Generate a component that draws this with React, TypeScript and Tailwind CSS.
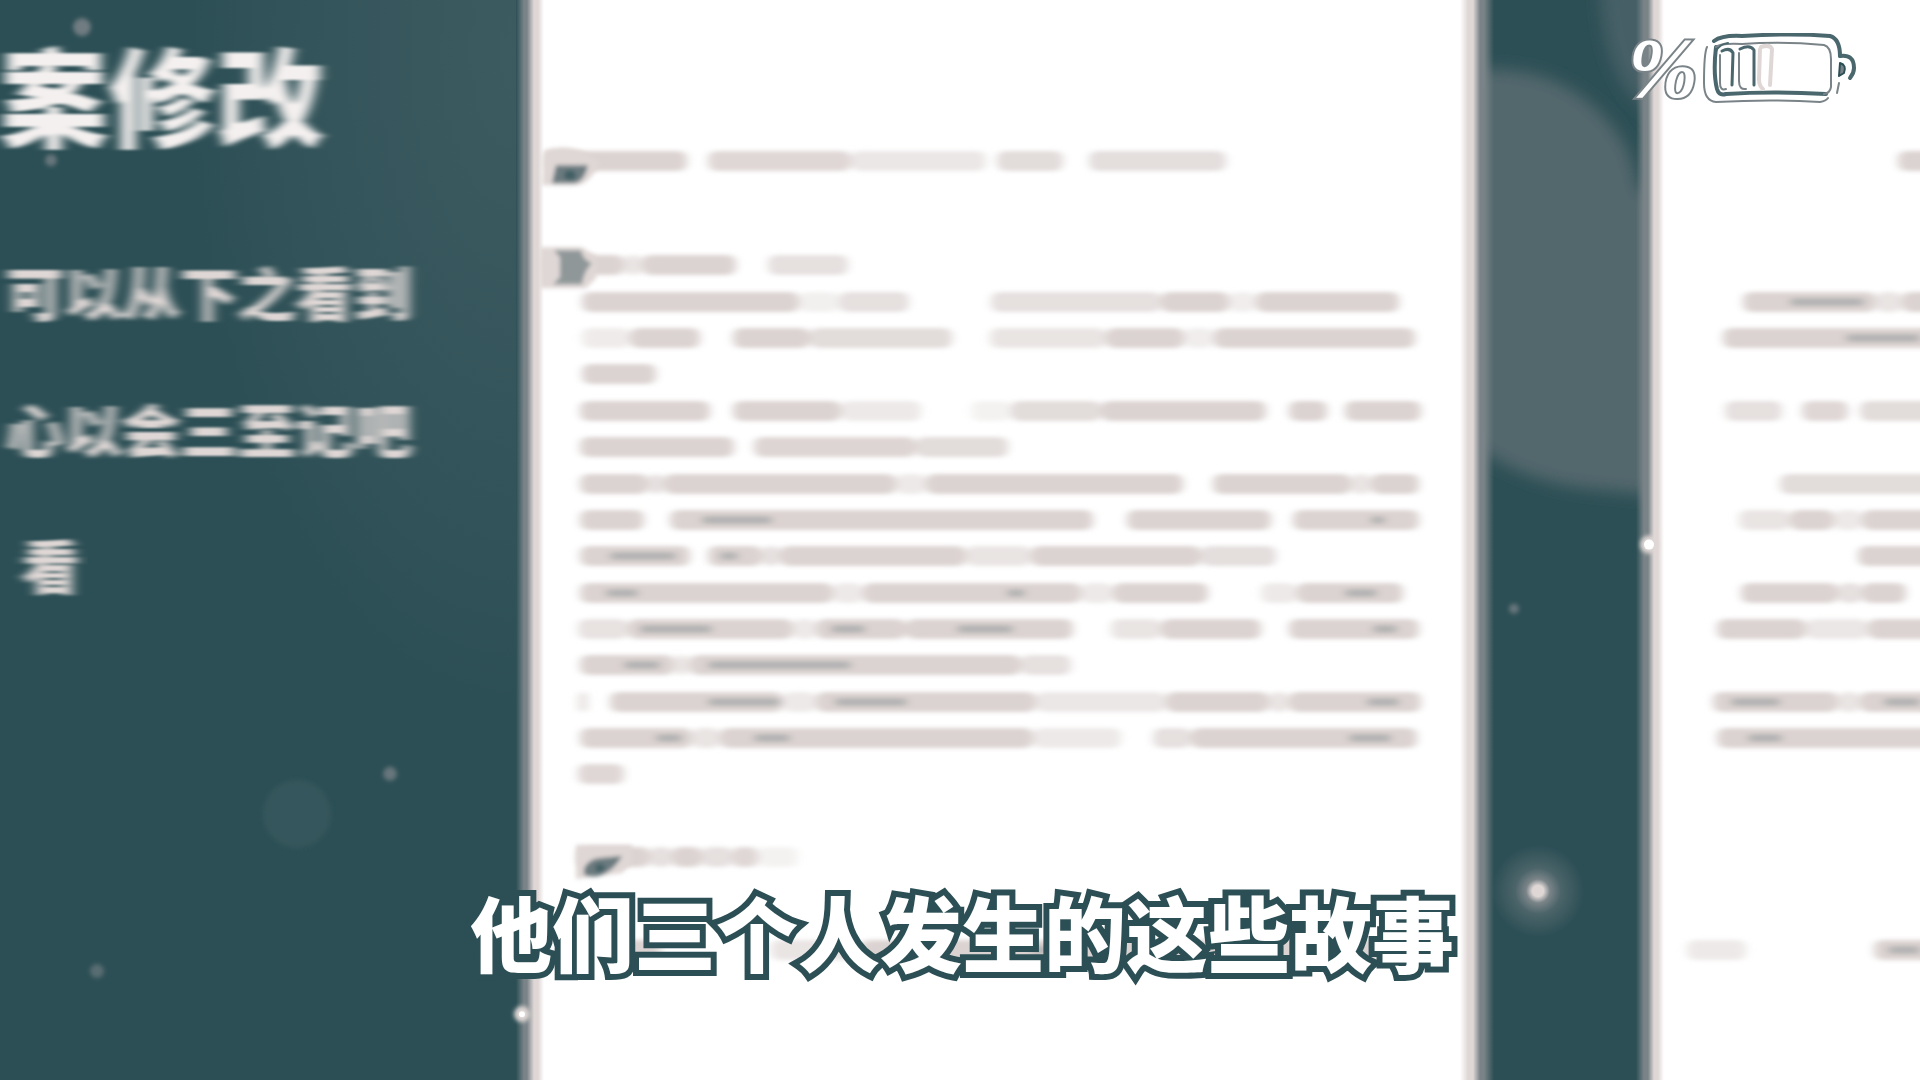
import React from "react";

type Bar = { from: number; to: number; tone?: number; speck?: [number, number] };
type Block = { space: string; rows: Bar[][] };

const b = (from: number, to: number, tone = 1, speck?: [number, number]): Bar => ({ from, to, tone, speck });

const mainBlocks: Block[] = [
  { space: "mt-[143px]", rows: [[b(546, 687), b(708, 850, 0.9), b(850, 985, 0.55), b(996, 1062, 0.8), b(1088, 1225, 0.75)]] },
  {
    space: "mt-[68px]",
    rows: [[b(546, 624), b(624, 642, 0.6), b(642, 736), b(768, 848, 0.7)]],
  },
  {
    space: "mt-px",
    rows: [
      [b(582, 798), b(798, 838, 0.35), b(838, 908, 0.7), b(990, 1160, 0.7), b(1160, 1228), b(1228, 1255, 0.4), b(1255, 1398)],
      [b(582, 630, 0.45), b(630, 700), b(733, 810), b(810, 952, 0.8), b(990, 1105, 0.6), b(1105, 1183), b(1183, 1213, 0.4), b(1213, 1414)],
      [b(582, 656)],
    ],
  },
  {
    space: "mt-px",
    rows: [
      [b(580, 710), b(733, 840), b(840, 920, 0.5), b(970, 1010, 0.3), b(1010, 1100, 0.8), b(1100, 1265), b(1288, 1326), b(1344, 1420)],
      [b(580, 734), b(754, 915, 0.95), b(915, 1007, 0.8)],
    ],
  },
  {
    space: "mt-px",
    rows: [
      [b(580, 648), b(648, 664, 0.7), b(664, 895), b(895, 925, 0.5), b(925, 1182), b(1212, 1350), b(1350, 1370, 0.6), b(1370, 1418)],
      [b(580, 644), b(670, 1092, 1, [702, 772]), b(1126, 1270), b(1292, 1418, 1, [1370, 1384])],
      [b(580, 690, 1, [610, 676]), b(708, 762, 1, [720, 738]), b(762, 780, 0.7), b(780, 965), b(965, 1030, 0.6), b(1030, 1200), b(1200, 1275, 0.75)],
    ],
  },
  {
    space: "mt-px",
    rows: [
      [b(580, 832, 1, [606, 638]), b(832, 862, 0.5), b(862, 1080, 1, [1006, 1024]), b(1080, 1112, 0.5), b(1112, 1207), b(1260, 1296, 0.5), b(1296, 1402, 1, [1344, 1376])],
      [b(578, 628, 0.65), b(628, 792, 1, [640, 712]), b(792, 815, 0.5), b(815, 905, 1, [830, 864]), b(905, 1072, 1, [956, 1012]), b(1110, 1160, 0.6), b(1160, 1260), b(1288, 1418, 1, [1372, 1396])],
      [b(580, 674, 1, [624, 660]), b(674, 690, 0.6), b(690, 1020, 1, [708, 850]), b(1020, 1070, 0.7)],
    ],
  },
  {
    space: "mt-px",
    rows: [
      [b(578, 588, 0.6), b(610, 782, 1, [708, 780]), b(782, 815, 0.5), b(815, 1035, 1, [834, 906]), b(1035, 1165, 0.55), b(1165, 1268), b(1268, 1288, 0.6), b(1288, 1420, 1, [1366, 1398])],
      [b(580, 692, 1, [656, 682]), b(692, 720, 0.6), b(720, 1032, 1, [754, 790]), b(1032, 1120, 0.5), b(1152, 1190, 0.7), b(1190, 1416, 1, [1348, 1390])],
      [b(578, 624, 0.9)],
    ],
  },
  { space: "mt-[47px]", rows: [[b(578, 650), b(650, 672, 0.7), b(672, 702), b(702, 732, 0.7), b(732, 758, 0.9), b(758, 798, 0.3)]] },
  { space: "mt-[57px]", rows: [[b(622, 660), b(770, 860, 0.6), b(860, 900), b(940, 1440, 1, [1030, 1060])]] },
];

const sideBlocks: Block[] = [
  { space: "mt-[143px]", rows: [[b(1898, 1940)]] },
  { space: "mt-[68px]", rows: [[]] },
  {
    space: "mt-px",
    rows: [
      [b(1742, 1876, 1, [1790, 1864]), b(1876, 1902, 0.6), b(1902, 1940)],
      [b(1722, 1940, 1, [1846, 1920])],
      [],
    ],
  },
  { space: "mt-px", rows: [[b(1724, 1782, 0.7), b(1802, 1848, 0.9), b(1860, 1940, 0.8)], []] },
  { space: "mt-px", rows: [[b(1780, 1940, 0.8)], [b(1738, 1790, 0.6), b(1790, 1834), b(1834, 1862, 0.5), b(1862, 1940)], [b(1858, 1940)]] },
  {
    space: "mt-px",
    rows: [[b(1740, 1838), b(1838, 1862, 0.7), b(1862, 1906)], [b(1716, 1806), b(1806, 1868, 0.55), b(1868, 1940)], []],
  },
  {
    space: "mt-px",
    rows: [[b(1712, 1838, 1, [1730, 1780]), b(1838, 1860, 0.6), b(1860, 1940, 1, [1884, 1920])], [b(1716, 1940, 1, [1748, 1782])], []],
  },
  { space: "mt-[47px]", rows: [[]] },
  { space: "mt-[57px]", rows: [[b(1686, 1746, 0.5), b(1874, 1940, 1, [1888, 1920])]] },
];

function TextRow({ bars, origin, span }: { bars: Bar[]; origin: number; span: number }) {
  let cursor = origin;
  return (
    <div className="flex h-9 items-center [filter:url(#smear)]">
      {bars.map((bar) => {
        const gap = ((bar.from - cursor) / span) * 100;
        const width = bar.to - bar.from;
        cursor = bar.to;
        return (
          <span
            key={bar.from}
            className="flex h-5 shrink-0 items-center rounded-lg bg-[#dbd3d1]"
            style={{ marginLeft: `${gap}%`, width: `${(width / span) * 100}%`, opacity: bar.tone }}
          >
            {bar.speck && (
              <span
                className="h-2 rounded-full bg-[#7a8488]/40"
                style={{
                  marginLeft: `${((bar.speck[0] - bar.from) / width) * 100}%`,
                  width: `${((bar.speck[1] - bar.speck[0]) / width) * 100}%`,
                }}
              />
            )}
          </span>
        );
      })}
    </div>
  );
}

function Page({ blocks, origin, span }: { blocks: Block[]; origin: number; span: number }) {
  return (
    <div className="flex flex-col">
      {blocks.map((block, i) => (
        <div key={i} className={block.space}>
          {block.rows.map((bars, j) => (
            <TextRow key={j} bars={bars} origin={origin} span={span} />
          ))}
        </div>
      ))}
    </div>
  );
}

function Battery() {
  return (
    <svg viewBox="0 0 156 72" className="h-[72px] w-[156px]" fill="none" strokeLinecap="round" strokeLinejoin="round" aria-label="电量">
      <path d="M16 4 Q70 0 128 4 Q138 7 138 22 Q154 22 152 36 Q150 46 137 49 Q137 66 124 68 Q70 66 16 69 Q3 68 3 52 L3 24 Q4 6 16 4Z" fill="#fff" />
      <path d="M12 8 Q20 2 40 3 Q90 0 128 3 Q138 6 138 23" stroke="#4a676d" strokeWidth="4" />
      <path d="M138 23 Q152 21 152 35 Q152 40 148 45" stroke="#4a676d" strokeWidth="4" />
      <path d="M138 30 Q145 32 142 40 L137 43Z" stroke="#2c4f55" strokeWidth="2" fill="#7a8488" />
      <path d="M137 50 L135 60" stroke="#7a8488" strokeWidth="2" />
      <path d="M5 14 Q2 20 2 50 Q2 68 14 69 Q70 66 118 69 Q124 68 126 65" stroke="#7a8488" strokeWidth="2" />
      <path d="M14 14 Q11 40 15 56 Q17 63 24 61 Q70 58 124 61" stroke="#4a676d" strokeWidth="4" />
      <path d="M14 14 Q18 10 40 11 Q80 8 122 12 Q129 14 129 26 L129 54 Q128 60 122 61" stroke="#7a8488" strokeWidth="2" />
      <path d="M14 18 Q18 11 26 10" stroke="#4a676d" strokeWidth="2" />
      <path d="M18 22 L18 50 Q18 58 24 56" stroke="#7a8488" strokeWidth="2" />
      <path d="M20 18 Q28 14 31 20 L30 52" stroke="#4a676d" strokeWidth="3" />
      <path d="M37 20 L37 48 Q37 57 44 56" stroke="#7a8488" strokeWidth="2" />
      <path d="M38 16 Q48 11 52 17 L52 52" stroke="#4a676d" strokeWidth="3" />
      <path d="M58 16 L57 46 Q57 53 61 56 M59 14 Q68 11 70 16 L68 52" stroke="#dfd7d5" strokeWidth="4" />
    </svg>
  );
}

function Sparks() {
  return (
    <svg className="pointer-events-none absolute inset-0 z-20 h-full w-full" viewBox="0 0 1920 1080" preserveAspectRatio="none" aria-hidden="true">
      <defs>
        <radialGradient id="halo">
          <stop offset="0" stopColor="#dfd7d5" />
          <stop offset="0.12" stopColor="#dfd7d5" />
          <stop offset="0.26" stopColor="#7a8488" />
          <stop offset="0.5" stopColor="#7a8488" stopOpacity="0.4" />
          <stop offset="1" stopColor="#7a8488" stopOpacity="0" />
        </radialGradient>
        <filter id="soft">
          <feGaussianBlur stdDeviation="2" />
        </filter>
      </defs>
      <circle cx="1538" cy="890" r="46" fill="url(#halo)" />
      <g filter="url(#soft)">
        <circle cx="82" cy="27" r="9" fill="#6f7c81" />
        <circle cx="51" cy="160" r="6" fill="#66767b" />
        <circle cx="390" cy="773" r="7" fill="#66767b" />
        <circle cx="97" cy="970" r="7" fill="#586d72" />
        <circle cx="297" cy="813" r="34" fill="#35565c" />
        <circle cx="1514" cy="608" r="5" fill="#66767b" />
        <circle cx="522" cy="1013" r="8" fill="#dfd7d5" />
        <circle cx="1649" cy="544" r="9" fill="#dfd7d5" />
      </g>
      <circle cx="522" cy="1013" r="3" fill="#fff" />
      <circle cx="1649" cy="544" r="5" fill="#fff" />
      <g filter="url(#soft)">
        <path d="M544 150 Q566 144 584 152 L600 162 Q590 184 576 185 H542Z" fill="#dfd7d5" />
        <path d="M556 165 H588 Q584 182 574 183 H552Z" fill="#6a7a7f" />
        <ellipse cx="570" cy="175" rx="6" ry="5" fill="#3f5e64" />
        <path d="M540 247 H582 L596 256 V278 L586 288 H540Z" fill="#dfd7d5" />
        <path d="M554 250 H581 Q583 260 592 263 Q584 270 582 284 H553 L560 277 V257Z" fill="#8f9799" />
        <path d="M576 844 H632 V862 L622 872 L576 878Z" fill="#dfd7d5" />
        <path d="M584 868 Q588 858 600 857 L622 855 Q616 866 606 872 Q596 878 584 874Z" fill="#6a7a7f" />
        <ellipse cx="600" cy="867" rx="5" ry="4" fill="#3f5e64" />
      </g>
    </svg>
  );
}

export default function App() {
  return (
    <main className="relative flex min-h-screen w-full overflow-hidden bg-[#2c4f55] font-['Noto_Sans_CJK_SC','Noto_Sans',sans-serif]">
      <svg className="absolute h-0 w-0" aria-hidden="true">
        <filter id="streak" x="-10%" width="120%">
          <feGaussianBlur stdDeviation="6 1" />
        </filter>
        <filter id="smear" x="-5%" width="110%" y="-20%" height="140%">
          <feGaussianBlur stdDeviation="5 2" />
        </filter>
      </svg>

      <aside className="w-[26.9%] shrink-0 overflow-hidden bg-[radial-gradient(ellipse_at_100%_5%,#3c5b61_0%,#34555b_25%,#2c4f55_45%)] whitespace-nowrap">
        <h1 className="mt-[34px] flex h-[116px] w-[324px] items-center justify-end text-[108px] leading-none font-black text-[#f4f0ef] [filter:url(#streak)]">
          案修改
        </h1>
        <p className="mt-[112px] flex h-[58px] w-[412px] items-center justify-end text-[58px] leading-none font-black text-[#dfd7d5] [filter:url(#streak)]">
          可以从下之看到
        </p>
        <p className="mt-[79px] flex h-[58px] w-[412px] items-center justify-end text-[58px] leading-none font-black text-[#dfd7d5] [filter:url(#streak)]">
          心以会三至记吧
        </p>
        <p className="mt-[78px] flex h-[58px] w-[80px] items-center justify-end text-[58px] leading-none font-black text-[#dfd7d5] [filter:url(#streak)]">
          看
        </p>
      </aside>

      <section className="relative z-10 w-[51%] shrink-0 overflow-hidden bg-[linear-gradient(to_right,#7a848800_0,#7a8488_8px,#7a8488_11px,#dfd7d5_18px,#dfd7d5_22px,#fff_28px,#fff_calc(100%-36px),#dfd7d5_calc(100%-28px),#dfd7d5_calc(100%-23px),#7a8488_calc(100%-16px),#7a8488_calc(100%-12px),#7a848800_calc(100%-2px))]">
        <Page blocks={mainBlocks} origin={516} span={979} />
      </section>

      <div className="w-[7.3%] shrink-0">
        <svg className="h-full w-full overflow-visible" viewBox="0 0 140 1080" preserveAspectRatio="none" aria-hidden="true">
          <filter id="haze" x="-20%" width="140%">
            <feGaussianBlur stdDeviation="8" />
          </filter>
          <g filter="url(#haze)" fill="#53676d">
            <path d="M-30 70 Q70 60 122 134 Q138 156 142 190 L170 190 V496 L90 488 Q20 480 -30 438Z" />
            <path d="M104 -20 H170 V130 L136 96 Q104 60 104 -20Z" opacity="0.7" />
          </g>
        </svg>
      </div>

      <section className="relative z-10 min-w-0 flex-1 overflow-hidden bg-[linear-gradient(to_right,#7a848800_0,#7a8488_8px,#7a8488_12px,#dfd7d5_18px,#dfd7d5_22px,#fff_28px)]">
        <Page blocks={sideBlocks} origin={1635} span={285} />
      </section>

      <Sparks />

      <div className="absolute top-[33px] right-[62px] z-20 flex items-start gap-1">
        <span className="font-['Liberation_Serif',serif] text-[84px] leading-[72px] font-bold text-white italic [paint-order:stroke_fill] [-webkit-text-stroke:4px_#7a8488]">
          %
        </span>
        <Battery />
      </div>

      <p className="absolute inset-x-0 bottom-[102px] z-20 pl-1 text-center text-[82px] leading-[96px] font-black whitespace-nowrap text-white [paint-order:stroke_fill] [stroke-linejoin:round] [-webkit-text-stroke:12px_#2c4f55]">
        他们三个人发生的这些故事
      </p>
    </main>
  );
}
